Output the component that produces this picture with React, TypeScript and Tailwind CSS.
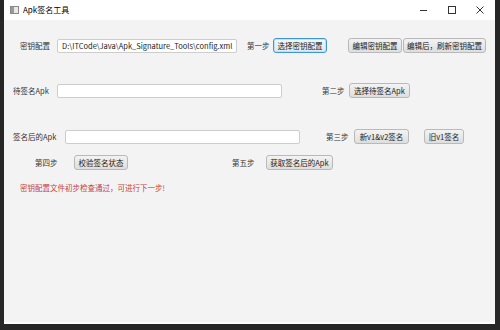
import React from "react";

const font = { fontFamily: '"Noto Sans CJK SC", "Noto Sans", sans-serif' };

function Btn({ w, children, focus }: { w: string; children: React.ReactNode; focus?: boolean }) {
  return (
    <div
      className={`${w} h-[15px] shrink-0 flex items-center justify-center rounded-[3px] text-[7.5px] leading-none text-[#222] ${
        focus
          ? "border border-[#3c99d6] bg-gradient-to-b from-[#f3f8fc] to-[#dfe9f2] shadow-[inset_0_0_0_1px_#bfe0f5]"
          : "border border-[#b9b9b9] bg-gradient-to-b from-[#f3f3f3] to-[#dedede]"
      }`}
    >
      {children}
    </div>
  );
}

function Label({ w, children, ml }: { w: string; children: React.ReactNode; ml?: string }) {
  return (
    <div className={`${w} ${ml ?? ""} shrink-0 text-[7.5px] leading-none text-[#333] whitespace-nowrap`}>{children}</div>
  );
}

function Input({ w, value }: { w: string; value?: string }) {
  return (
    <div className={`${w} h-[14px] shrink-0 flex items-center rounded-[2px] border border-[#cdcdcd] bg-white px-[4px] text-[7.5px] leading-none text-[#222] whitespace-nowrap overflow-hidden`}>
      {value}
    </div>
  );
}

export default function App() {
  return (
    <div className="w-[500px] h-[330px] bg-[#262626] flex overflow-hidden" style={font}>
      <div className="w-[4px] shrink-0" />
      <div className="w-[491px] h-[324px] flex flex-col bg-[#f3f3f3] border-b-2 border-[#fbfbfb]">
        {/* title bar */}
        <div className="h-[20px] bg-white flex items-center shrink-0">
          <div className="ml-[6px] w-[9px] h-[8px] border border-[#8a8a8a] bg-[#e9e9e9] flex">
            <div className="w-[3px] h-full bg-[#9a9a9a]" />
          </div>
          <div className="ml-[4px] text-[8px] leading-none text-black">Apk签名工具</div>
          <div className="flex-1" />
          <div className="w-[7px] h-[1px] bg-[#333] mr-[21px]" />
          <div className="w-[8px] h-[8px] border border-[#333] mr-[20px]" />
          <svg width="8" height="8" viewBox="0 0 8 8" className="mr-[11px]">
            <path d="M0.5 0.5 L7.5 7.5 M7.5 0.5 L0.5 7.5" stroke="#333" strokeWidth="1" />
          </svg>
        </div>

        {/* row 1 */}
        <div className="mt-[18px] h-[15px] flex items-center">
          <Label w="w-[37px]" ml="ml-[16px]">密钥配置</Label>
          <Input w="w-[180px]" value="D:\ITCode\Java\Apk_Signature_Tools\config.xml" />
          <Label w="w-[26px]" ml="ml-[10px]">第一步</Label>
          <Btn w="w-[54px]" focus>选择密钥配置</Btn>
          <div className="w-[21px] shrink-0" />
          <Btn w="w-[54px]">编辑密钥配置</Btn>
          <div className="w-[1px] shrink-0" />
          <Btn w="w-[83px]">编辑后，刷新密钥配置</Btn>
        </div>

        {/* row 2 */}
        <div className="mt-[30px] h-[15px] flex items-center">
          <Label w="w-[44px]" ml="ml-[9px]">待签名Apk</Label>
          <Input w="w-[225px]" />
          <Label w="w-[27px]" ml="ml-[40px]">第二步</Label>
          <Btn w="w-[61px]">选择待签名Apk</Btn>
        </div>

        {/* row 3 */}
        <div className="mt-[31px] h-[15px] flex items-center">
          <Label w="w-[52px]" ml="ml-[9px]">签名后的Apk</Label>
          <Input w="w-[235px]" />
          <Label w="w-[28px]" ml="ml-[26px]">第三步</Label>
          <Btn w="w-[55px]">新v1&amp;v2签名</Btn>
          <div className="w-[15px] shrink-0" />
          <Btn w="w-[40px]">旧v1签名</Btn>
        </div>

        {/* row 4 */}
        <div className="mt-[11px] h-[15px] flex items-center">
          <Label w="w-[39px]" ml="ml-[31px]">第四步</Label>
          <Btn w="w-[54px]">校验签名状态</Btn>
          <Label w="w-[34px]" ml="ml-[104px]">第五步</Label>
          <Btn w="w-[67px]">获取签名后的Apk</Btn>
        </div>

        {/* message */}
        <div className="mt-[14px] ml-[16px] text-[7.5px] leading-none text-[#c4443e]">
          密钥配置文件初步检查通过，可进行下一步!
        </div>
      </div>
    </div>
  );
}
